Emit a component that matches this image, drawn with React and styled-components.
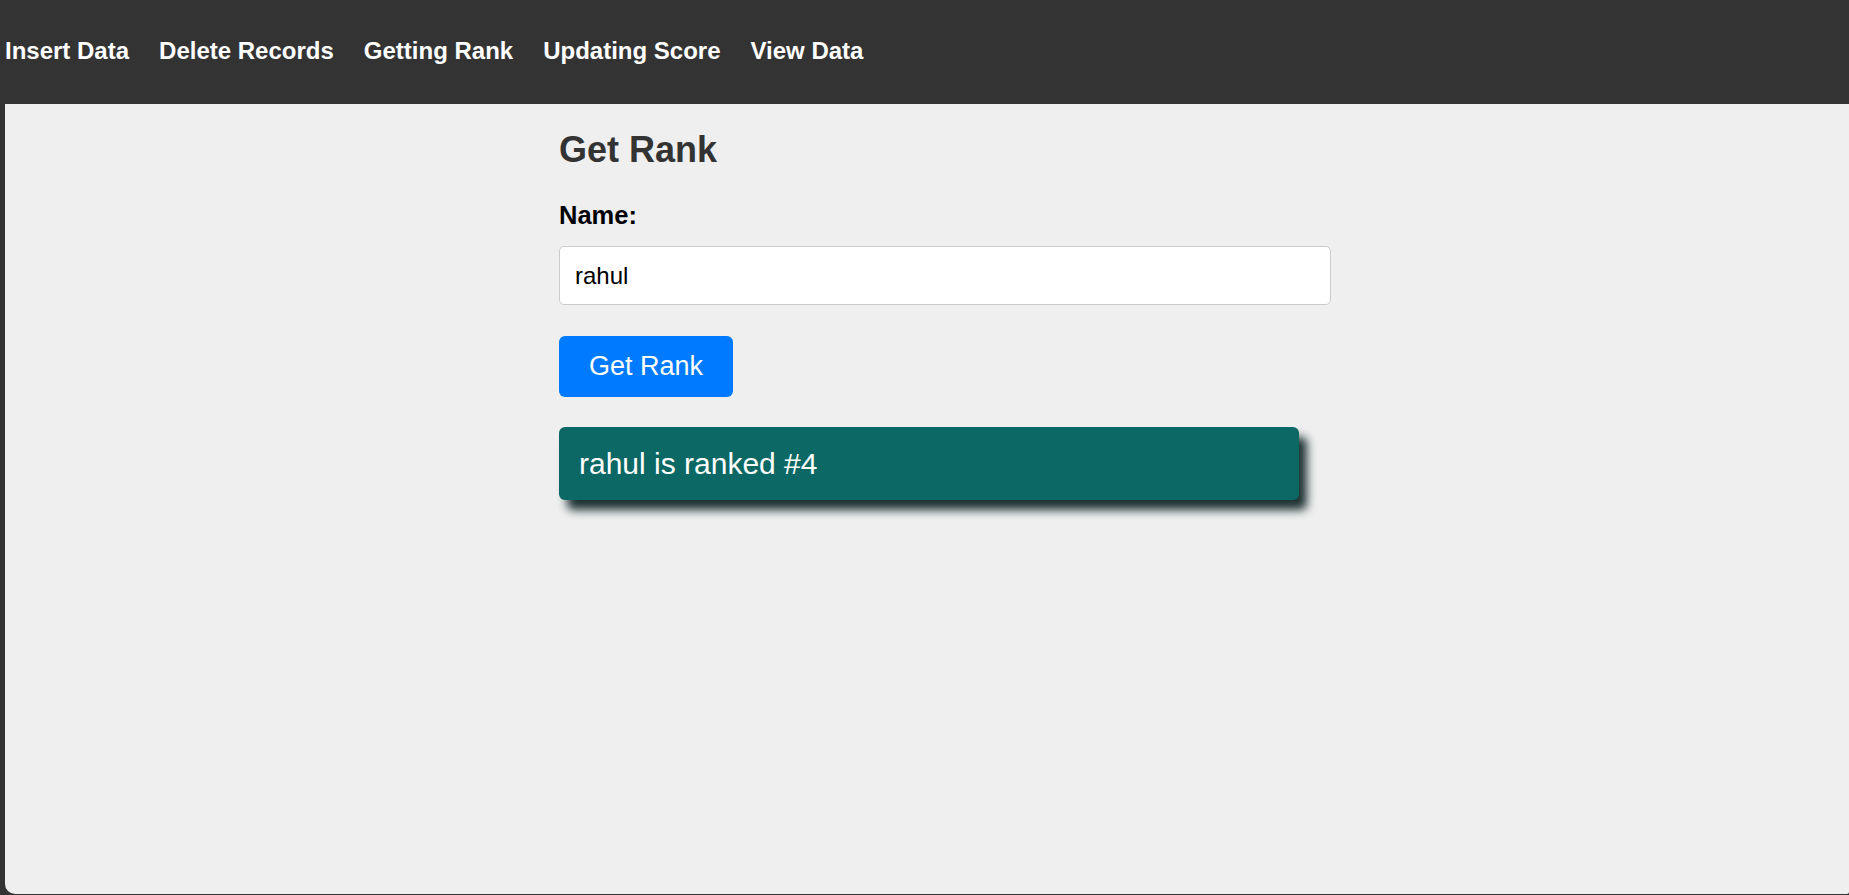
import React, { useState } from "react";
import styled, { createGlobalStyle } from "styled-components";

const GlobalStyle = createGlobalStyle`
  html, body {
    margin: 0;
    padding: 0;
    background: #333333;
    font-family: "Liberation Sans", Arial, sans-serif;
  }
  * { box-sizing: border-box; }
`;

const Shell = styled.div`
  display: flex;
  flex-direction: column;
  height: 895px;
  padding-bottom: 1px;
`;

const NavBar = styled.nav`
  height: 104px;
  flex-shrink: 0;
  display: flex;
  align-items: center;
  gap: 30px;
  padding: 0 0 2px 5px;
  background: #333333;
`;

const NavLink = styled.a`
  color: #ffffff;
  font-size: 24px;
  font-weight: 700;
  text-decoration: none;
  cursor: pointer;
`;

const Main = styled.main`
  flex: 1;
  margin-left: 5px;
  background: #efefef;
  border-bottom-left-radius: 10px;
  border-bottom-right-radius: 2px;
  padding-left: 36px;
`;

const Column = styled.section`
  width: 772px;
  margin: 0 auto;
  display: flex;
  flex-direction: column;
  align-items: flex-start;
`;

const Title = styled.h2`
  margin: 26px 0 0;
  font-size: 36px;
  line-height: 40px;
  font-weight: 700;
  color: #333333;
`;

const Label = styled.label`
  margin-top: 30px;
  font-size: 25.5px;
  line-height: 30px;
  font-weight: 700;
  color: #000000;
`;

const TextInput = styled.input`
  margin-top: 16px;
  width: 100%;
  height: 59px;
  padding: 0 15px;
  border: 1px solid #cccccc;
  border-radius: 5px;
  background: #ffffff;
  font-family: "Liberation Sans", Arial, sans-serif;
  font-size: 24px;
  color: #000000;
  outline: none;
`;

const Button = styled.button`
  margin-top: 31px;
  height: 61px;
  padding: 0 30px;
  border: none;
  border-radius: 6px;
  background: #007bff;
  color: #ffffff;
  font-family: "Liberation Sans", Arial, sans-serif;
  font-size: 27px;
  cursor: pointer;
`;

const Result = styled.div`
  margin-top: 30px;
  width: 740px;
  height: 73px;
  display: flex;
  align-items: center;
  padding-left: 20px;
  border-radius: 6px;
  background: #0b6864;
  color: #ffffff;
  font-size: 30px;
  box-shadow: 8px 10px 10px rgba(18, 40, 40, 0.95);
`;

export default function App() {
  const [name, setName] = useState("rahul");
  const links = ["Insert Data", "Delete Records", "Getting Rank", "Updating Score", "View Data"];
  return (
    <>
      <GlobalStyle />
      <Shell>
        <NavBar>
          {links.map((l) => (
            <NavLink key={l}>{l}</NavLink>
          ))}
        </NavBar>
        <Main>
          <Column>
            <Title>Get Rank</Title>
            <Label htmlFor="name">Name:</Label>
            <TextInput id="name" value={name} onChange={(e) => setName(e.target.value)} />
            <Button>Get Rank</Button>
            <Result>rahul is ranked #4</Result>
          </Column>
        </Main>
      </Shell>
    </>
  );
}
